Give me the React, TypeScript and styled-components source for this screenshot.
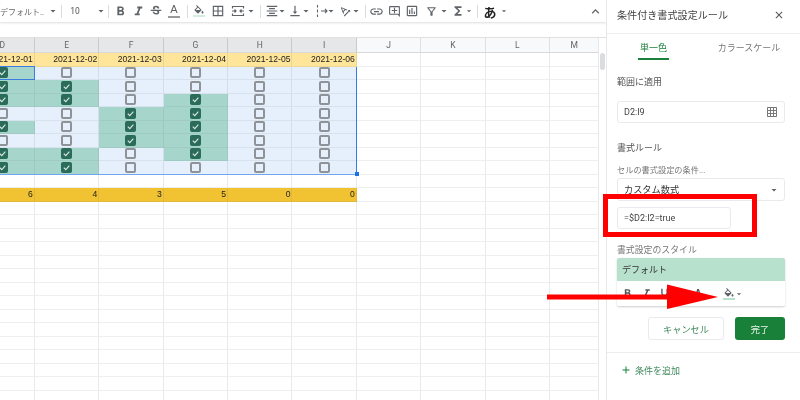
import React from "react";
import styled, { createGlobalStyle } from "styled-components";
import {
  MdFormatBold, MdFormatItalic, MdStrikethroughS, MdFormatUnderlined, MdBorderAll,
  MdVerticalAlignBottom, MdLink, MdOutlineAddComment, MdOutlineInsertChart, MdOutlineFilterAlt,
  MdFunctions, MdExpandLess, MdClose, MdAdd, MdGridOn, MdArrowDropDown, MdTextRotationAngleup, MdFormatAlignCenter,
} from "react-icons/md";

const Global = createGlobalStyle`
  html, body { margin: 0; padding: 0; background: #fff; overflow: hidden; }
  body { font-family: Roboto, "Noto Sans CJK JP", sans-serif; }
  #root { width: 800px; height: 400px; }
`;

const Page = styled.div`
  position: relative; width: 800px; height: 400px; display: flex; overflow: hidden; background: #fff;
  filter: blur(0.4px);
`;
const Main = styled.div`width: 606px; flex: none; display: flex; flex-direction: column; overflow: hidden;`;
const Toolbar = styled.div`
  height: 22px; flex: none; display: flex; align-items: center; color: #5f6368;
  box-shadow: 0 1px 2px rgba(60,64,67,.18); position: relative; z-index: 2; background: #fff;
`;
const Slot = styled.div<{ $w: number }>`
  width: ${p => p.$w}px; flex: none; height: 100%; display: flex; align-items: center; justify-content: center;
  white-space: nowrap;
  & > * { flex: none; }
`;
const FontName = styled(Slot)`font-size: 8px; color: #666; justify-content: flex-start;`;
const FontSize = styled(Slot)`font-size: 8.5px; color: #555;`;
const Sep = styled.div`width: 1px; height: 13px; background: #dadce0; flex: none;`;
const Kana = styled(Slot)`font-size: 13px; font-weight: 700; color: #222;`;
const Underlined = styled.span<{ $c: string }>`
  display: flex; flex-direction: column; align-items: center; line-height: 1; font-size: 11px; font-weight: 500; color: #5f6368;
  font-family: "Liberation Sans", sans-serif;
  &::after { content: ""; width: 12px; height: 2px; margin-top: 1px; background: ${p => p.$c}; }
`;
const FormulaBar = styled.div`height: 15px; flex: none; background: #fff;`;
const SheetRow = styled.div`flex: 1; display: flex; min-height: 0; border-top: 1px solid #e0e0e0;`;
const GridClip = styled.div`width: 598px; flex: none; overflow: hidden;`;
const Grid = styled.div`
  position: relative; margin-left: -29.5px;
  display: grid; grid-template-columns: repeat(9, 64.4px) 49.5px; grid-template-rows: 15px repeat(26, 13.5px);
`;
const Head = styled.div<{ $sel: boolean }>`
  display: flex; align-items: center; justify-content: center; font-size: 8.5px; color: #666;
  background: ${p => (p.$sel ? "#e6e7e9" : "#f8f9fa")};
  border-right: 1px solid ${p => (p.$sel ? "#c8cacc" : "#e0e0e0")}; border-bottom: 1px solid #d8d8d8; box-sizing: border-box;
`;
const Cell = styled.div<{ $bg: string }>`
  box-sizing: border-box; background: ${p => p.$bg}; border-right: 1px solid rgba(120,130,130,.16); border-bottom: 1px solid rgba(120,130,130,.13);
  display: flex; align-items: center; justify-content: center; position: relative;
`;
const ValueCell = styled(Cell)`
  justify-content: flex-end; padding-right: 1px; font-family: "Liberation Sans", sans-serif; font-size: 8.6px; color: #222; white-space: nowrap;
`;
const CheckBox = styled.span<{ $on: boolean }>`
  width: 11px; height: 11px; box-sizing: border-box; border-radius: 2px; flex: none; display: flex; align-items: center; justify-content: center;
  background: ${p => (p.$on ? "#2a6b5a" : "transparent")}; border: ${p => (p.$on ? "none" : "2px solid #8f9397")};
`;
const ActiveCell = styled.div`
  position: absolute; left: 0; top: 28px; width: 64.4px; height: 13.5px; box-sizing: border-box; border: 1.5px solid #3b7de0; pointer-events: none;
`;
const SelectionEdge = styled.div`
  position: absolute; left: 0; top: 28.5px; width: 386.4px; height: 108px; box-sizing: border-box;
  border-right: 1px solid #2f7de8; border-bottom: 1px solid #6fa5ee; pointer-events: none;
  &::after { content: ""; position: absolute; right: -3px; bottom: -2px; width: 4px; height: 4px; background: #1a73e8; }
`;
const ScrollTrack = styled.div`width: 8px; flex: none; background: #fff; border-left: 1px solid #e8e8e8; box-sizing: border-box; padding: 15px 0 0 1px;`;
const ScrollThumb = styled.div`width: 5px; height: 17px; border-radius: 3px; background: #dadce0;`;

const Panel = styled.aside`
  width: 194px; flex: none; box-sizing: border-box; border-left: 1px solid #e8e8e8; background: #fff; display: flex; flex-direction: column;
`;
const PanelHead = styled.div`
  height: 34px; flex: none; box-sizing: border-box; padding: 0 15px 4px 10px; display: flex; align-items: center; justify-content: space-between;
  border-bottom: 1px solid #eceded; font-size: 10.1px; color: #444;
`;
const Tabs = styled.div`display: flex; height: 26px; margin-top: 1px; flex: none;`;
const Tab = styled.div<{ $on?: boolean }>`
  box-sizing: border-box; font-size: 9px; display: flex; align-items: center; justify-content: center; height: 25px;
  color: ${p => (p.$on ? "#188038" : "#777")};
`;
const SingleTab = styled(Tab)`
  width: 31px; margin-left: 31px; border-bottom: 2px solid #188038; white-space: nowrap; padding-top: 1px;
`;
const ScaleTab = styled(Tab)`width: 64px; margin-left: 48px; white-space: nowrap;`;
const Body = styled.div`display: flex; flex-direction: column; padding: 0 15px 0 10px; flex: none;`;
const Label = styled.div<{ $mt: number }>`font-size: 9px; color: #555; margin-top: ${p => p.$mt}px; height: 14px; line-height: 14px; white-space: nowrap;`;
const HintLabel = styled(Label)`font-size: 8.2px; color: #777;`;
const StyleLabel = styled(Label)`font-size: 8.9px; color: #777;`;
const Field = styled.div<{ $mt: number; $w?: number; $h?: number }>`
  box-sizing: border-box; width: ${p => p.$w ?? 168}px; height: ${p => p.$h ?? 22}px; margin-top: ${p => p.$mt}px; flex: none;
  border: 1px solid #e8eaed; border-radius: 3px; display: flex; align-items: center; justify-content: space-between; padding: 0 6px;
  font-size: 9px; color: #444;
`;
const SelectField = styled(Field)`font-size: 9.2px; color: #333; padding-right: 4px;`;
const SelectText = styled.span`margin-top: -2px;`;
const Preview = styled.div`
  width: 168px; margin-top: 1px; border-radius: 2px; overflow: hidden; box-shadow: 0 1px 2px rgba(60,64,67,.25); flex: none;
`;
const PreviewText = styled.div`height: 23px; background: #b7e1cd; font-size: 9px; color: #333; display: flex; align-items: center; padding-left: 5px;`;
const PreviewBar = styled.div`height: 25px; background: #fff; display: flex; align-items: center; color: #555; padding-left: 3px;`;
const MiniSlot = styled.div<{ $w: number }>`
  width: ${p => p.$w}px; flex: none; display: flex; justify-content: center; align-items: center; font-family: "Liberation Sans", sans-serif; font-size: 10px; font-weight: 700;
  & > * { flex: none; }
`;
const Buttons = styled.div`display: flex; justify-content: flex-end; gap: 11px; margin-top: 11px;`;
const Ghost = styled.div`
  width: 76px; height: 23px; box-sizing: border-box; border: 1px solid #e8eaed; border-radius: 3px; color: #3f8a5c; font-size: 9.2px;
  display: flex; align-items: center; justify-content: center;
`;
const Done = styled.div`
  width: 50px; height: 23px; border-radius: 3px; background: #188038; color: #e9f3ec; font-size: 9.2px; display: flex; align-items: center; justify-content: center;
`;
const Divider = styled.div`height: 1px; background: #eceded; margin-top: 12px; flex: none;`;
const AddRule = styled.div`
  display: flex; align-items: center; gap: 3px; padding-left: 13px; margin-top: 10px; color: #3f8a5c; font-size: 9px; height: 14px;
`;
const RedBox = styled.div`
  position: absolute; left: 603px; top: 194px; width: 154px; height: 43px; box-sizing: border-box; border: 5.5px solid #f00; pointer-events: none;
`;
const ArrowSvg = styled.svg`position: absolute; left: 540px; top: 280px; pointer-events: none;`;

const Caret = ({ s = 12, c = "#5f6368" }: { s?: number; c?: string }) => <MdArrowDropDown size={s} color={c} />;

const Check = () => (
  <svg width="9" height="9" viewBox="0 0 10 10" fill="none">
    <path d="M2 5.2 4.2 7.3 8.2 3" stroke="#d8e8e2" strokeWidth="1.3" />
  </svg>
);

const Bucket = () => (
  <svg width="12" height="9" viewBox="0 0 24 18" fill="#5f6368">
    <path d="M16.56 8.94 7.62 0 6.21 1.41l2.38 2.38-5.15 5.15c-.59.59-.59 1.54 0 2.12l5.5 5.5c.29.29.68.44 1.06.44s.77-.15 1.06-.44l5.5-5.5c.59-.58.59-1.53 0-2.12zM5.21 10 10 5.21 14.79 10H5.21zM19 11.5s-2 2.17-2 3.5c0 1.1.9 2 2 2s2-.9 2-2c0-1.33-2-3.5-2-3.5z" />
  </svg>
);

const Merge = () => (
  <svg width="14" height="14" viewBox="0 0 14 14" fill="none" stroke="#5f6368" strokeWidth="1.2">
    <path d="M1.5 4.5V2.5h11v2M1.5 9.5v2h11v-2M1 7h4M3.5 5.5 5 7 3.5 8.5M13 7H9M10.5 5.5 9 7l1.5 1.5" />
  </svg>
);

const Wrap = () => (
  <svg width="13" height="14" viewBox="0 0 13 14" fill="none" stroke="#5f6368" strokeWidth="1.1">
    <path d="M2.5 1v2.5M2.5 5.5v3M2.5 10.5V13M6 7h6M10 5l2 2-2 2" />
  </svg>
);

const cols = ["D", "E", "F", "G", "H", "I", "J", "K", "L", "M"];
const dates = ["2021-12-01", "2021-12-02", "2021-12-03", "2021-12-04", "2021-12-05", "2021-12-06"];
const checks = ["100000", "110000", "110100", "001100", "101100", "001100", "110100", "110000"];
const totals = [6, 4, 3, 5, 0, 0];
const TINT = "#e6f0fc";
const GREEN = "#a6d6cb";

export default function App() {
  const rows: React.ReactNode[] = [];
  for (let r = 0; r < 26; r++) {
    cols.forEach((c, i) => {
      const key = `${r}-${c}`;
      if (r === 0) {
        rows.push(<ValueCell key={key} $bg={i < 6 ? "#ffe599" : "#fff"}>{i < 6 ? dates[i] : ""}</ValueCell>);
      } else if (r <= 8) {
        if (i < 6) {
          const on = checks[r - 1][i] === "1";
          rows.push(
            <Cell key={key} $bg={on ? GREEN : TINT}>
              <CheckBox $on={on}>{on && <Check />}</CheckBox>
            </Cell>
          );
        } else rows.push(<Cell key={key} $bg="#fff" />);
      } else if (r === 10) {
        rows.push(<ValueCell key={key} $bg={i < 6 ? "#f1c232" : "#fff"}>{i < 6 ? totals[i] : ""}</ValueCell>);
      } else rows.push(<Cell key={key} $bg="#fff" />);
    });
  }

  return (
    <Page>
      <Global />
      <Main>
        <Toolbar>
          <FontName $w={47}>デフォルト..</FontName>
          <Slot $w={12}><Caret /></Slot>
          <Slot $w={2} />
          <Sep />
          <FontSize $w={26}>10</FontSize>
          <Slot $w={7} />
          <Slot $w={12}><Caret /></Slot>
          <Slot $w={1} />
          <Sep />
          <Slot $w={22}><MdFormatBold size={15} /></Slot>
          <Slot $w={14}><MdFormatItalic size={15} /></Slot>
          <Slot $w={22}><MdStrikethroughS size={14} /></Slot>
          <Slot $w={14}><Underlined $c="#999">A</Underlined></Slot>
          <Slot $w={6} />
          <Sep />
          <Slot $w={22}><Underlined $c="#d5ece0"><Bucket /></Underlined></Slot>
          <Slot $w={16}><MdBorderAll size={14} /></Slot>
          <Slot $w={24}><Merge /></Slot>
          <Slot $w={2}><Caret /></Slot>
          <Slot $w={8} />
          <Sep />
          <Slot $w={4} />
          <Slot $w={14}><MdFormatAlignCenter size={14} /></Slot>
          <Slot $w={6}><Caret /></Slot>
          <Slot $w={20}><MdVerticalAlignBottom size={14} /></Slot>
          <Slot $w={2}><Caret /></Slot>
          <Slot $w={8} />
          <Slot $w={12}><Wrap /></Slot>
          <Slot $w={8}><Caret /></Slot>
          <Slot $w={20}><MdTextRotationAngleup size={13} /></Slot>
          <Slot $w={2}><Caret /></Slot>
          <Slot $w={8} />
          <Sep />
          <Slot $w={20}><MdLink size={15} /></Slot>
          <Slot $w={16}><MdOutlineAddComment size={13} /></Slot>
          <Slot $w={20}><MdOutlineInsertChart size={14} /></Slot>
          <Slot $w={18}><MdOutlineFilterAlt size={13} /></Slot>
          <Slot $w={8}><Caret /></Slot>
          <Slot $w={20}><MdFunctions size={14} /></Slot>
          <Slot $w={2}><Caret s={10} /></Slot>
          <Slot $w={7} />
          <Sep />
          <Kana $w={24}>あ</Kana>
          <Slot $w={4}><Caret s={10} /></Slot>
          <Slot $w={82} />
          <Slot $w={14}><MdExpandLess size={15} /></Slot>
        </Toolbar>
        <FormulaBar />
        <SheetRow>
          <GridClip>
            <Grid>
              {cols.map((c, i) => <Head key={c} $sel={i < 6}>{c}</Head>)}
              {rows}
              <SelectionEdge />
              <ActiveCell />
            </Grid>
          </GridClip>
          <ScrollTrack><ScrollThumb /></ScrollTrack>
        </SheetRow>
      </Main>
      <Panel>
        <PanelHead>
          <span>条件付き書式設定ルール</span>
          <MdClose size={12} color="#555" />
        </PanelHead>
        <Tabs>
          <SingleTab $on>単一色</SingleTab>
          <ScaleTab>カラースケール</ScaleTab>
        </Tabs>
        <Body>
          <Label $mt={14}>範囲に適用</Label>
          <Field $mt={12}>
            <span>D2:I9</span>
            <MdGridOn size={12} color="#777" />
          </Field>
          <Label $mt={18}>書式ルール</Label>
          <HintLabel $mt={8}>セルの書式設定の条件...</HintLabel>
          <SelectField $mt={1} $h={23}>
            <SelectText>カスタム数式</SelectText>
            <Caret s={12} />
          </SelectField>
          <Field $mt={6} $w={114}>=$D2:I2=true</Field>
          <StyleLabel $mt={14}>書式設定のスタイル</StyleLabel>
          <Preview>
            <PreviewText>デフォルト</PreviewText>
            <PreviewBar>
              <MiniSlot $w={14}><MdFormatBold size={13} /></MiniSlot>
              <MiniSlot $w={24}><MdFormatItalic size={13} /></MiniSlot>
              <MiniSlot $w={12}><MdFormatUnderlined size={13} /></MiniSlot>
              <MiniSlot $w={56}>A</MiniSlot>
              <MiniSlot $w={6}><Underlined $c="#b7e1cd"><Bucket /></Underlined></MiniSlot>
              <MiniSlot $w={14}><Caret s={10} /></MiniSlot>
            </PreviewBar>
          </Preview>
          <Buttons>
            <Ghost>キャンセル</Ghost>
            <Done>完了</Done>
          </Buttons>
        </Body>
        <Divider />
        <AddRule>
          <MdAdd size={12} color="#188038" />
          条件を追加
        </AddRule>
      </Panel>
      <RedBox />
      <ArrowSvg width="180" height="32" viewBox="0 0 180 32">
        <path d="M7 14.5H127V4.5L178 17 127 29V19.5H7Z" fill="#f00" />
      </ArrowSvg>
    </Page>
  );
}
